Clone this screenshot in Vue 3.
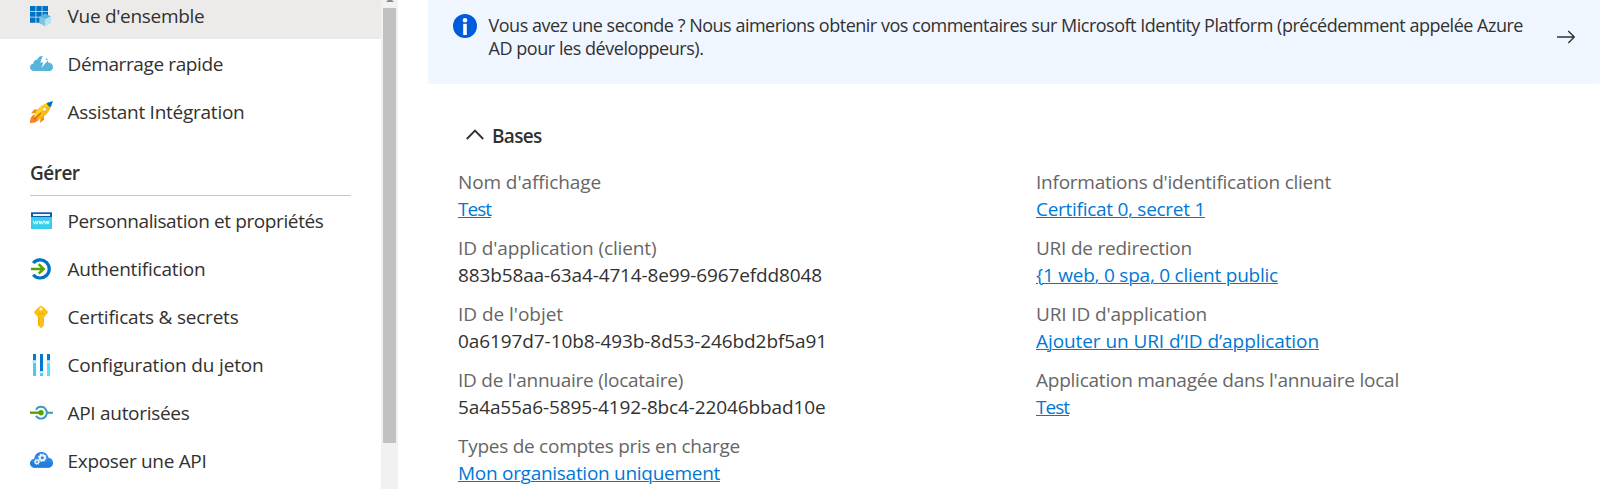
<script setup>
const topItems = [
  { icon: 'grid', text: "Vue d'ensemble", width: 137, active: true },
  { icon: 'cloud', text: 'Démarrage rapide', width: 155.500 },
  { icon: 'rocket', text: 'Assistant Intégration', width: 177 },
]
const manageItems = [
  { icon: 'www', text: 'Personnalisation et propriétés', width: 256 },
  { icon: 'auth', text: 'Authentification', width: 138 },
  { icon: 'key', text: 'Certificats & secrets', width: 171 },
  { icon: 'token', text: 'Configuration du jeton', width: 196 },
  { icon: 'api', text: 'API autorisées', width: 122 },
  { icon: 'expose', text: 'Exposer une API', width: 139 },
]
const groups = [
  { items: topItems },
  { title: 'Gérer', items: manageItems },
]
const columns = [
  [
    { label: "Nom d'affichage", lw: 143, value: 'Test', vw: 33, link: true },
    { label: "ID d'application (client)", lw: 198.500, value: '883b58aa-63a4-4714-8e99-6967efdd8048', vw: 364 },
    { label: "ID de l'objet", lw: 105, value: '0a6197d7-10b8-493b-8d53-246bd2bf5a91', vw: 369 },
    { label: "ID de l'annuaire (locataire)", lw: 225, value: '5a4a55a6-5895-4192-8bc4-22046bbad10e', vw: 367.500 },
    { label: 'Types de comptes pris en charge', lw: 282, value: 'Mon organisation uniquement', vw: 262, link: true },
  ],
  [
    { label: "Informations d'identification client", lw: 295, value: 'Certificat 0, secret 1', vw: 169, link: true },
    { label: 'URI de redirection', lw: 156, value: '{1 web, 0 spa, 0 client public', vw: 242, link: true },
    { label: "URI ID d'application", lw: 171, value: 'Ajouter un URI d’ID d’application', vw: 283, link: true },
    { label: "Application managée dans l'annuaire local", lw: 363, value: 'Test', vw: 33, link: true },
  ],
]
const bannerLines = [
  { text: 'Vous avez une seconde ? Nous aimerions obtenir vos commentaires sur Microsoft Identity Platform (précédemment appelée Azure', width: 1034.500 },
  { text: 'AD pour les développeurs).', width: 215 },
]

// Tracks the text so that it fills the given width.
const vFit = {
  mounted(el, { value }) {
    const natural = el.getBoundingClientRect().width
    el.style.letterSpacing = (value - natural) / el.textContent.length + 'px'
  },
}
</script>

<template>
  <div class="page">
    <aside class="sidebar">
      <nav class="menu">
        <section v-for="(g, gi) in groups" :key="gi">
          <h3 v-if="g.title" class="group-title"><span v-fit="49.500">{{ g.title }}</span></h3>
          <div v-for="it in g.items" :key="it.text" class="item" :class="{ active: it.active }">
            <svg class="icon" viewBox="0 0 23 23">
              <g v-if="it.icon === 'grid'">
                <path fill="#0072c6" d="M0 1h5.600v5H0zM6.300 1h5.400v5H6.300zM12.400 1H18v5h-5.600zM0 6.700h5.600v5H0zM6.300 6.700h5.400v5H6.300zM12.400 6.700H18v5h-5.600zM0 12.400h5.600v5.300H0zM6.300 12.400h5.400v5.300H6.300z" />
                <path fill="#59b4d9" d="M15.200 8.600l5.900 2.900-5.900 2.800-5.900-2.800z" />
                <path fill="#7cc5e3" d="M9.300 11.500l5.900 2.800v6.900l-5.900-2.900z" />
                <path fill="#b8e2f1" d="M21.100 11.500l-5.900 2.800v6.900l5.900-2.900z" />
              </g>
              <g v-else-if="it.icon === 'cloud'" transform="translate(0 -.6)">
                <path fill="#59b4d9" d="M4.200 18.700C1.800 18.700 0 17 0 14.800c0-2 1.300-3.300 3.300-3.500C3.200 9 5 7.100 7.100 7.300 8.200 5 9.800 3.600 12 3.600c3.500 0 6.300 2.700 6.300 6.600 2.800.1 4.700 1.900 4.700 4.300 0 2.500-1.700 4.200-4 4.200z" />
                <path fill="#fff" d="M12.700 3.500h5l-2.200 4.200h2.700l-6.800 7.800 1.800-5.300h-3z" />
              </g>
              <g v-else-if="it.icon === 'rocket'">
                <path fill="#f78d1e" d="M8 8.500H4L1 12.500l4.500-.5zM14 14.500v4.300L10 22l.5-5z" />
                <path fill="#f58220" d="M4 13.500C1 15 0 18 0 22c4 0 7.500-1 9-4z" />
                <path fill="#fcb913" d="M19 1.500c-5 1.500-9 4-11.500 7.500L4 15l4 4 6.500-4C18 12 20 9 21.500 4z" />
                <path fill="#f9d616" d="M19 1.500c-5 1.500-9 4-11.500 7.500L4 15l2 2L20.200 2.800z" />
                <path fill="#0072c6" d="M23 0l-6.200 2c.2 2 1.500 3.500 4 4z" />
                <circle cx="14.500" cy="8.200" r="2" fill="#fff" stroke="#ef8b1d" stroke-width=".6" />
                <path stroke="#d95f16" stroke-width="1.300" d="M4.500 18.200l6.500-6.500" />
              </g>
              <g v-else-if="it.icon === 'www'">
                <path fill="#32d0ee" d="M1 7h21v12H1z" />
                <path fill="#0f5ba8" d="M1 2.300h21V7H1z" />
                <path fill="#f2f6fa" d="M3 4h17v2H3z" />
                <path fill="none" stroke="#fff" stroke-width="1" d="M3.300 10.700l1.200 3.500 1.200-3.200 1.200 3.200 1.200-3.500M8.900 10.700l1.200 3.500 1.200-3.200 1.200 3.200 1.200-3.500M14.500 10.700l1.200 3.500 1.200-3.200 1.200 3.200 1.200-3.500" />
              </g>
              <g v-else-if="it.icon === 'auth'" fill="none">
                <path stroke="#0072c6" stroke-width="3.200" d="M3.200 5A9.100 9.100 0 1 1 3.200 16.800" />
                <path stroke="#57a300" stroke-width="2.500" d="M1 10.900h13M8.700 6.100l5 4.800-5 4.800" />
              </g>
              <g v-else-if="it.icon === 'key'" transform="translate(0 -.7)">
                <path fill="#fbc116" d="M11 .7q1.200 0 2 .8l4.500 4.500q.9 1 0 2L14 12v8l-3 3-3-3v-8L4.500 8q-.9-1 0-2L9 1.500q.8-.8 2-.8z" />
                <path fill="#f5a70b" d="M8 8h6v1H8zM8 12h1.500v8H8zM12.500 14h1.500v1.200h-1.500z" />
                <circle cx="11" cy="3.600" r="1.500" fill="#fff8df" />
              </g>
              <g v-else-if="it.icon === 'token'" transform="translate(0 -.7)">
                <path fill="#0078d4" d="M3 .7h3v6.500H3zM10 .7h3v17h-3zM17 .7h3v6.500h-3z" />
                <path fill="#42cfeb" d="M3 9.400h3v13.300H3zM10 20h3v2.700h-3z" />
                <path fill="#50e6ff" d="M17 9.400h3v13.300h-3z" />
                <path fill="#c3e4f5" d="M2.300 7.300h4.400v1.800H2.300zM9.300 17.700h4.400v1.800H9.300zM16.300 7.300h4.400v1.800h-4.400z" />
              </g>
              <g v-else-if="it.icon === 'api'" fill="none" transform="translate(0 -.8)">
                <path stroke="#3999c6" stroke-width="1.900" d="M6 8.500a5.700 5.700 0 0 1 10 0M6 14.500a5.700 5.700 0 0 0 10 0M15.900 8.300a6 6 0 0 1 0 6.400M16.800 11.500H23" />
                <path stroke="#57a300" stroke-width="2.400" d="M0 11.500h11" />
                <circle cx="11" cy="11.500" r="2.700" fill="#57a300" />
              </g>
              <g v-else transform="translate(0 -1)">
                <path fill="#2f86e4" d="M5 18.800c-2.900 0-5-2-5-4.500 0-2.400 1.700-4.200 4.300-4.500C4.500 5.700 7.500 3 11.500 3c3.700 0 6.300 2.300 7 5.800 2.700.3 4.500 2.300 4.500 4.900 0 2.900-2.100 5.100-5 5.100z" />
                <path fill="#1b78d8" d="M.2 13h22.700c.3 3.300-2 5.800-4.900 5.800H5c-3.200 0-5.400-2.500-4.800-5.800z" opacity=".6" />
                <circle cx="12.300" cy="8.700" r="2.500" fill="none" stroke="#e8f3fd" stroke-width="2" />
                <circle cx="12.300" cy="8.700" r="3.700" fill="none" stroke="#e8f3fd" stroke-width="1.200" stroke-dasharray="1.450 1.450" />
                <circle cx="7" cy="12.900" r="1.700" fill="none" stroke="#e8f3fd" stroke-width="1.500" />
                <circle cx="7" cy="12.900" r="2.700" fill="none" stroke="#e8f3fd" stroke-width="1" stroke-dasharray="1.060 1.060" />
              </g>
            </svg>
            <span v-fit="it.width" class="item-text">{{ it.text }}</span>
          </div>
        </section>
      </nav>
      <div class="scrollbar">
        <svg class="arrow-up" viewBox="0 0 8 2"><path fill="#8a8a8a" d="M2 0h4l2 2H0z" /></svg>
        <div class="thumb"></div>
      </div>
    </aside>

    <main class="content">
      <div class="banner">
        <svg class="info" viewBox="0 0 24 24">
          <circle cx="12" cy="12" r="12" fill="#015cda" />
          <circle cx="12" cy="6.200" r="2.300" fill="#fff" />
          <path fill="#fff" d="M10.200 9.800h3.600V21h-3.600z" />
        </svg>
        <p class="message">
          <template v-for="l in bannerLines" :key="l.text"><span v-fit="l.width">{{ l.text }}</span><br></template>
        </p>
        <svg class="go" viewBox="0 0 18 14"><path fill="none" stroke="#323130" stroke-width="1.400" d="M0 7h17M11.300 1l6 6-6 6" /></svg>
      </div>

      <header class="heading">
        <svg class="chevron" viewBox="0 0 18 11"><path fill="none" stroke="#323130" stroke-width="1.900" d="M.8 10L9 1.600l8.200 8.400" /></svg>
        <h2><span v-fit="49.500">Bases</span></h2>
      </header>

      <div class="columns">
        <dl v-for="(col, ci) in columns" :key="ci">
          <div v-for="f in col" :key="f.label" class="field">
            <dt><span v-fit="f.lw">{{ f.label }}</span></dt>
            <dd>
              <a v-if="f.link" v-fit="f.vw">{{ f.value }}</a>
              <span v-else v-fit="f.vw">{{ f.value }}</span>
            </dd>
          </div>
        </dl>
      </div>
    </main>
  </div>
</template>

<style>
body { background: #fff; overflow: hidden; }
</style>

<style scoped>
.page {
  display: flex;
  width: 1609px;
  height: 489px;
  overflow: hidden;
  font-family: "Open Sans", "Noto Sans", sans-serif;
  font-size: 19px;
  color: #323130;
  white-space: nowrap;
}
.sidebar { display: flex; width: 398px; flex: none; }
.menu { width: 381px; margin-top: -9px; }
.item {
  display: flex;
  align-items: center;
  height: 48px;
  padding-left: 30px;
  gap: 14.500px;
}
.item.active { background: #edebe9; }
.item-text { padding-top: 2px; line-height: 26px; }
.icon { width: 23px; height: 23px; flex: none; margin-top: 3px; }
.group-title {
  box-sizing: border-box;
  height: 61px;
  margin: 0 30px;
  padding-top: 16px;
  border-bottom: 1px solid #c8c6c4;
  font-size: 19px;
  font-weight: 600;
  line-height: 44px;
}
.scrollbar { width: 17px; background: #f1f1f1; }
.arrow-up { display: block; width: 8px; height: 2px; margin: 0 auto 6px 5px; }
.thumb { width: 13px; height: 435px; margin-left: 2px; background: #c1c1c1; }

.content { flex: 1; padding-left: 30px; }
.banner {
  display: flex;
  box-sizing: border-box;
  width: 1172px;
  height: 84px;
  padding: 14px 25px 0 25px;
  border-radius: 0 0 3px 3px;
  background: #eff6ff;
}
.info { width: 24px; height: 24px; flex: none; }
.message { flex: 1; margin: 0 0 0 11.500px; font-size: 18px; line-height: 23px; }
.go { width: 18px; height: 14px; flex: none; margin-top: 16px; }
.heading { display: flex; align-items: center; height: 30px; margin: 37px 0 0 38px; gap: 8px; }
.chevron { width: 18px; height: 11px; margin-top: -3px; }
h2 { margin: 0; font-size: 19px; font-weight: 600; line-height: 30px; }
.columns { display: grid; grid-template-columns: 578px 1fr; margin: 18px 0 0 30px; }
dl { margin: 0; }
.field { height: 66px; line-height: 27px; }
dt { color: #666; }
dd { margin: 0; }
a { color: #0078d4; text-decoration: underline; text-decoration-thickness: 1px; text-underline-offset: 1px; }
</style>
